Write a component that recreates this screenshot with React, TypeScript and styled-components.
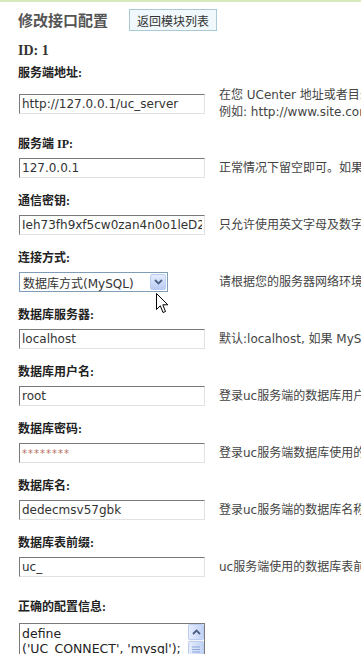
import React from "react";
import styled, { createGlobalStyle } from "styled-components";

const GlobalStyle = createGlobalStyle`
  html, body {
    margin: 0;
    overflow: hidden;
    background: #fff;
  }
  body {
    font-family: "DejaVu Sans", "Noto Sans CJK SC", sans-serif;
    font-size: 12px;
    color: #333;
  }
`;

const Page = styled.div`
  border-top: 2px solid #d8e8bf;
  padding-left: 18px;
  width: 700px;
`;

const Header = styled.div`
  display: flex;
  align-items: center;
  gap: 21px;
  margin-top: 7px;
`;

const Title = styled.h2`
  margin: 0;
  font-family: "Noto Sans CJK SC", sans-serif;
  font-size: 15px;
  font-weight: 700;
  line-height: 22px;
  color: #555;
`;

const BackButton = styled.button`
  height: 22px;
  padding: 0 7px;
  border: 1px solid #a9c9d7;
  background: #f0f8fb;
  font-family: "Noto Sans CJK SC", sans-serif;
  font-size: 12px;
  color: #333;
`;

const IdLine = styled.div`
  margin-top: 12px;
  font-family: "Liberation Serif", serif;
  font-size: 14px;
  font-weight: 700;
  line-height: 16px;
  color: #333;
`;

const Form = styled.div`
  margin-top: 6px;
`;

const Field = styled.div`
  margin-bottom: 15px;
`;

const Label = styled.div<{ $space?: number }>`
  font-family: "Liberation Serif", "Noto Sans CJK SC", serif;
  font-size: 12px;
  font-weight: 700;
  line-height: 17px;
  color: #222;
  margin-bottom: ${(p) => p.$space ?? 5}px;
`;

const Row = styled.div`
  display: grid;
  grid-template-columns: 201px max-content;
  align-items: center;
`;

const TextInput = styled.input<{ $secret?: boolean }>`
  box-sizing: border-box;
  margin: 0 0 0 1px;
  width: 186px;
  height: 20px;
  padding: 0 2px;
  border: 1px solid;
  border-color: #7a7a7a #e2e2e2 #e2e2e2 #7a7a7a;
  font-family: "DejaVu Sans", sans-serif;
  font-size: ${(p) => (p.$secret ? 10 : 12)}px;
  color: ${(p) => (p.$secret ? "#b86f66" : "#333")};
  letter-spacing: ${(p) => (p.$secret ? "1px" : "0")};
  outline: none;
`;

const Desc = styled.div`
  white-space: nowrap;
  line-height: 17px;
  color: #444;
`;

const SelectBox = styled.div`
  position: relative;
  box-sizing: border-box;
  margin-left: 1px;
  width: 149px;
  height: 20px;
  border: 1px solid #7f9db9;
  display: flex;
  align-items: center;
  justify-content: space-between;
  padding-left: 3px;
  color: #333;
`;

const SelectArrow = styled.span`
  box-sizing: border-box;
  width: 16px;
  height: 16px;
  margin-right: 1px;
  border: 1px solid #bccdf3;
  border-radius: 2px;
  background: linear-gradient(#e4ecfe, #b9cbf4);
  display: flex;
  align-items: center;
  justify-content: center;
`;

const Pointer = styled.svg`
  position: absolute;
  left: 136px;
  top: 20px;
`;

const ConfigSection = styled.div`
  margin-top: 22px;
`;

const ConfigBox = styled.div`
  box-sizing: border-box;
  margin-left: 1px;
  width: 186px;
  height: 80px;
  border: 1px solid #7a7a7a;
  display: flex;
  overflow: hidden;
`;

const ConfigText = styled.div`
  flex: 1;
  padding: 2px 2px 0;
  font-size: 12.5px;
  line-height: 15px;
  white-space: pre;
  color: #222;
  overflow: hidden;
`;

const ScrollBar = styled.div`
  width: 16px;
  background: #f4f4f0;
  display: flex;
  flex-direction: column;
  gap: 1px;
`;

const ScrollPart = styled.div`
  box-sizing: border-box;
  height: 16px;
  border: 1px solid #bccdf3;
  border-radius: 2px;
  background: linear-gradient(90deg, #e4ecfe, #c3d3f6);
  display: flex;
  align-items: center;
  justify-content: center;
`;

const fields = [
  {
    label: "服务端 IP:",
    value: "127.0.0.1",
    desc: "正常情况下留空即可。如果由于域名解析问题导致 UCenter 与该应用通信失败，请尝试设置为该应用所在服务器的 IP 地址。",
  },
  {
    label: "通信密钥:",
    value: "Ieh73fh9xf5cw0zan4n0o1leD2s5b9a7",
    desc: "只允许使用英文字母及数字，限 64 字节。应用端的通信密钥必须与此设置保持一致。",
  },
];

const dbFields = [
  {
    label: "数据库服务器:",
    value: "localhost",
    desc: "默认:localhost, 如果 MySQL 端口不是默认的 3306，请填写如下形式：127.0.0.1:6033",
  },
  { label: "数据库用户名:", value: "root", desc: "登录uc服务端的数据库用户名" },
  { label: "数据库密码:", value: "********", desc: "登录uc服务端数据库使用的密码", secret: true },
  { label: "数据库名:", value: "dedecmsv57gbk", desc: "登录uc服务端的数据库名称" },
  { label: "数据库表前缀:", value: "uc_", desc: "uc服务端使用的数据库表前缀" },
];

export default function App() {
  return (
    <Page>
      <GlobalStyle />
      <Header>
        <Title>修改接口配置</Title>
        <BackButton>返回模块列表</BackButton>
      </Header>
      <IdLine>ID: 1</IdLine>
      <Form>
        <Field>
          <Label>服务端地址:</Label>
          <Row>
            <TextInput defaultValue="http://127.0.0.1/uc_server" />
            <Desc>
              在您 UCenter 地址或者目录改变的情况下，修改此项，一般情况请不要改动
              <br />
              例如: http://www.site.com/uc_server (最后不要加'/')
            </Desc>
          </Row>
        </Field>
        {fields.map((f) => (
          <Field key={f.label}>
            <Label>{f.label}</Label>
            <Row>
              <TextInput defaultValue={f.value} />
              <Desc>{f.desc}</Desc>
            </Row>
          </Field>
        ))}
        <Field>
          <Label>连接方式:</Label>
          <Row>
            <SelectBox>
              <span>数据库方式(MySQL)</span>
              <SelectArrow>
                <svg width="9" height="6" viewBox="0 0 9 6">
                  <path d="M1 1 L4.5 4.5 L8 1" fill="none" stroke="#4d6185" strokeWidth="1.8" />
                </svg>
              </SelectArrow>
              <Pointer width="13" height="21" viewBox="0 0 13 21">
                <path
                  d="M0.5 0.5 L0.5 16.5 L4.3 12.8 L7 19.5 L9.5 18.5 L6.8 11.8 L11.8 11.8 Z"
                  fill="#fff"
                  stroke="#000"
                  strokeWidth="1"
                />
              </Pointer>
            </SelectBox>
            <Desc>请根据您的服务器网络环境选择适当的连接方式</Desc>
          </Row>
        </Field>
        {dbFields.map((f) => (
          <Field key={f.label}>
            <Label>{f.label}</Label>
            <Row>
              <TextInput defaultValue={f.value} $secret={f.secret} />
              <Desc>{f.desc}</Desc>
            </Row>
          </Field>
        ))}
        <ConfigSection>
          <Label $space={7}>正确的配置信息:</Label>
          <ConfigBox>
            <ConfigText>
              {"define\n('UC_CONNECT', 'mysql');\ndefine\n('UC_DBHOST', 'localhost');"}
            </ConfigText>
            <ScrollBar>
              <ScrollPart>
                <svg width="9" height="6" viewBox="0 0 9 6">
                  <path d="M1 5 L4.5 1.5 L8 5" fill="none" stroke="#4d6185" strokeWidth="1.8" />
                </svg>
              </ScrollPart>
              <ScrollPart>
                <svg width="8" height="7" viewBox="0 0 8 7">
                  <path d="M0 1 H8 M0 3.5 H8 M0 6 H8" stroke="#8ea6d9" strokeWidth="1" />
                </svg>
              </ScrollPart>
            </ScrollBar>
          </ConfigBox>
        </ConfigSection>
      </Form>
    </Page>
  );
}
